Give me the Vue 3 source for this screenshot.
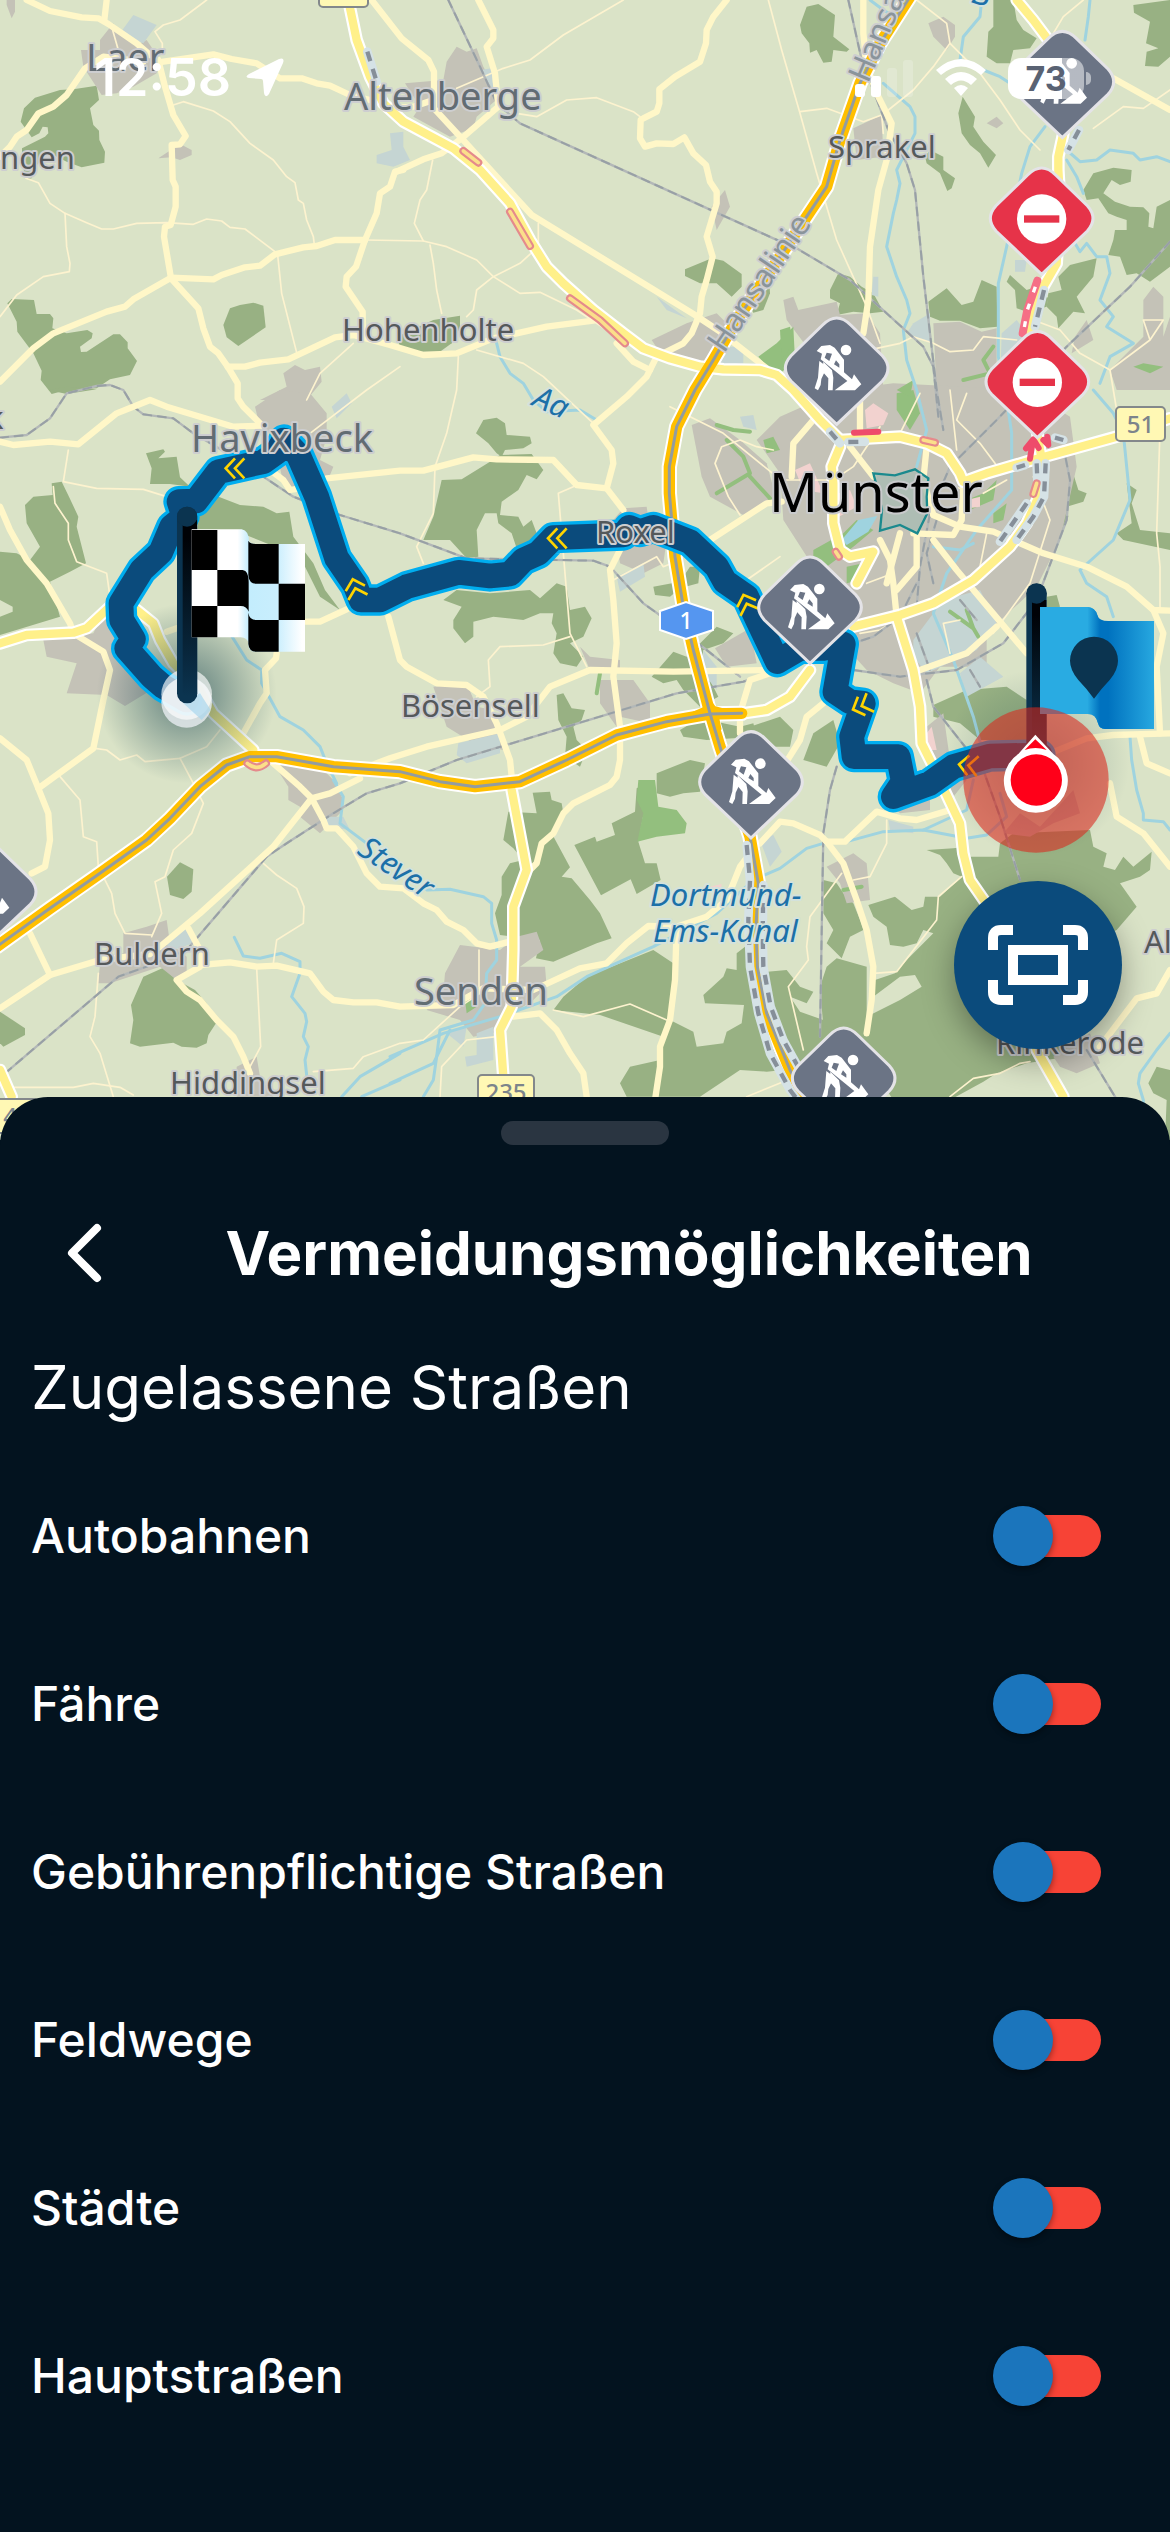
<template>
  <main class="screen">
    <section class="map" aria-label="Karte">
      <svg class="map-canvas" viewBox="0 0 1170 1140" aria-hidden="true">
        <defs>
          <linearGradient id="pole" x1="0" y1="0" x2="0" y2="1">
            <stop offset="0.1" stop-color="#000206" />
            <stop offset="1" stop-color="#0b3450" />
          </linearGradient>
          <linearGradient id="flagBack">
            <stop offset="0.2" stop-color="#0072bf" />
            <stop offset="1" stop-color="#27a8e0" />
          </linearGradient>
          <linearGradient id="flagFold">
            <stop offset="0" stop-color="#29abe2" />
            <stop offset="0.6" stop-color="#0072bf" />
          </linearGradient>
          <linearGradient id="clothFold">
            <stop offset="0.8" stop-color="#fff" />
            <stop offset="1" stop-color="#c3ecfd" />
          </linearGradient>
          <linearGradient id="clothBack">
            <stop offset="0" stop-color="#c3edfd" />
            <stop offset="0.5" stop-color="#c9eefd" />
            <stop offset="0.95" stop-color="#fff" />
          </linearGradient>
          <radialGradient id="shade">
            <stop offset="0" stop-color="#0b3a4a" stop-opacity="0.6" />
            <stop offset="0.5" stop-color="#0b3a4a" stop-opacity="0.3" />
            <stop offset="1" stop-color="#0b3a4a" stop-opacity="0" />
          </radialGradient>
          <path
            id="pin"
            d="M0 168 L-137 38 Q-171 0 -137 -38 L-42 -130 Q0 -172 42 -130 L137 -38 Q171 0 137 38 Z"
          />
          <g id="worker" fill="#fff">
            <circle cx="28" cy="-55" r="16" />
            <path
              fill-rule="evenodd"
              d="M-60 -52 L-46 -67 L-20 -70 L-6 -62 L22 -26 L22 12 L46 33 L52 18 L74 48 L55 66 L-6 66 L32 38 L-48 -27 L-44 -44 Z M-30 -47 L-36 -32 L-22 -22 L-14 -44 Z M-2 -24 L8 -12 L8 -2 L-8 -12 Z"
            />
            <path d="M-52 -22 L-36 -10 L-32 2 L-46 32 L-48 50 L-56 66 L-66 60 L-56 28 Z" />
            <path d="M-40 -20 L-14 6 L-10 28 L-12 66 L-26 66 L-25 30 L-42 10 Z" />
          </g>
          <path id="chevrons" d="M0 -30 L-28 0 L0 30 M28 -30 L0 0 L28 30" />
        </defs>

        <rect class="ground" width="1170" height="1140" />

        <!-- geometry is kept in map units, three to a pixel -->
        <g transform="scale(0.333333)">
          <path v-for="d in forests" :key="d" class="forest" :d="d" />
          <path v-for="d in towns" :key="d" class="town" :d="d" />
          <path v-for="d in industry" :key="d" class="industry" :d="d" />
          <path v-for="d in parks" :key="d" class="park" :d="d" />
          <path v-for="d in hospitals" :key="d" class="hospital" :d="d" />
          <path class="lake" d="M2525 1620 L2575 1560 L2632 1548 L2605 1595 L2540 1635 Z" />
          <path v-for="d in parkLines" :key="d" class="line park-line" :d="d" />
          <path v-for="d in rivers" :key="d" class="line river" :d="d" />
          <path v-for="d in lanes" :key="d" class="line lane" :d="d" />
          <path v-for="d in rails" :key="d" class="line rail" :d="d" />
          <path v-for="d in rails" :key="'t' + d" class="line rail-ties" :d="d" />
          <path v-for="d in roads" :key="d" class="line road" :d="d" />
          <path class="old-town" d="M2620 1420 L2685 1426 L2745 1408 L2785 1435 L2780 1490 L2782 1540 L2752 1600 L2700 1575 L2640 1592 L2646 1530 L2636 1480 Z" />
          <path v-for="d in mainRoads" :key="'c' + d" class="line main-casing" :d="d" />
          <path v-for="d in motorways" :key="'c' + d" class="line motorway-casing" :d="d" />
          <path v-for="d in mainRoads" :key="d" class="line main-road" :d="d" />
          <path v-for="d in motorways" :key="d" class="line motorway" :d="d" />
          <path class="junction" d="M2085 2140 L2118 2125 L2120 2095 L2142 2125 L2185 2136 L2150 2152 L2158 2190 L2130 2156 Z" />
          <path v-for="d in motorways" :key="'m' + d" class="line motorway-middle" :d="d" />
          <path v-for="d in works" :key="d" class="line works" :d="d" />
          <path v-for="d in works" :key="'d' + d" class="line works-dash" :d="d" />
          <g v-for="d in jams" :key="d">
            <path class="line jam-edge" :d="d" />
            <path class="line jam" :d="d" />
          </g>
          <path class="line closed" d="M2562 1298 L2635 1295" />
          <path class="line closed-wide" d="M3112 842 L3082 930 L3068 1000" />
          <path class="line closed-dash" d="M3106 860 L3082 930 L3070 1000" />
          <path class="line closed" d="M3090 1376 L3098 1325 M3078 1345 L3100 1318 L3116 1344 M3130 1320 L3145 1335 L3142 1310" />

          <circle class="shade" cx="560" cy="2080" r="270" />
          <circle class="shade faint" cx="3108" cy="2290" r="280" />

          <path class="line route-casing" :d="route" />
          <path class="line route" :d="route" />
          <use
            v-for="c in chevrons"
            :key="c.x"
            href="#chevrons"
            class="line chevron"
            :transform="`translate(${c.x} ${c.y}) rotate(${c.angle})`"
          />
        </g>

        <g v-for="s in shields" :key="s.x">
          <rect class="shield" :x="s.x" :y="s.y" :width="s.w" height="34" rx="4" />
          <text v-if="s.text" class="shield-text" :x="s.x + s.w / 2" :y="s.y + 26">{{ s.text }}</text>
        </g>
        <path class="autobahn" d="M660 611 L686 602 L713 611 L713 630 L686 639 L660 630 Z" />
        <text class="autobahn-text" x="686" y="629">1</text>

        <text
          v-for="l in labels"
          :key="l.text + l.x"
          :class="['label', l.kind]"
          :transform="`translate(${l.x} ${l.y}) rotate(${l.angle || 0})`"
        >{{ l.text }}</text>

        <g transform="scale(0.333333)">
          <g v-for="p in pins" :key="p.x" :transform="`translate(${p.x} ${p.y})`">
            <use href="#pin" :class="['pin', p.kind]" />
            <use v-if="p.kind === 'work'" href="#worker" />
            <template v-else>
              <circle cy="2" r="74" fill="#fff" />
              <rect class="bar" x="-53" y="-9" width="106" height="22" />
            </template>
          </g>

          <!-- destination -->
          <circle cx="560" cy="2107" r="76" fill="#e9eef1" fill-opacity="0.8" />
          <circle cx="560" cy="2083" r="76" fill="#fff" fill-opacity="0.65" />
          <path d="M550 2110 L600 2080 L632 2130 L605 2160 Z" fill="#a9d6ec" fill-opacity="0.7" />
          <rect x="531" y="1520" width="61" height="590" rx="30" fill="#0b3450" />
          <rect x="548" y="1560" width="43" height="530" fill="url(#pole)" />
          <circle cx="561" cy="1550" r="30" fill="#0b3450" />
          <path d="M575 1588 H725 Q747 1592 747 1625 L747 1932 Q742 1912 722 1912 H575 Z" fill="url(#clothFold)" />
          <path d="M745 1620 Q750 1632 768 1632 H915 V1955 H765 Q747 1955 745 1935 Z" fill="url(#clothBack)" />
          <path d="M575 1590 H652 V1710 H575 Z M575 1818 H652 V1912 H575 Z M652 1710 H728 Q746 1712 746 1745 V1835 Q740 1818 722 1818 H652 Z" />
          <path d="M745 1622 Q750 1632 768 1632 H836 V1751 H768 Q747 1751 745 1725 Z M836 1751 H915 V1860 H836 Z M745 1838 Q748 1860 768 1860 H836 V1955 H768 Q747 1955 745 1932 Z" />

          <!-- start -->
          <rect x="3079" y="1750" width="61" height="560" rx="30" fill="#0b3450" />
          <rect x="3096" y="1800" width="43" height="440" fill="url(#pole)" />
          <circle cx="3110" cy="1781" r="30" fill="#0b3450" />
          <path d="M3290 1863 H3462 V2187 H3315 Q3296 2187 3290 2150 Z" fill="url(#flagBack)" />
          <path d="M3120 1821 H3265 Q3285 1822 3292 1845 Q3296 1863 3315 1863 V2187 Q3298 2187 3294 2170 Q3288 2142 3268 2142 H3120 Z" fill="#29abe2" />
          <path d="M3262 1821 Q3285 1822 3292 1845 Q3296 1863 3325 1863 V2187 H3315 Q3298 2187 3294 2170 Q3288 2142 3262 2142 Z" fill="url(#flagFold)" />
          <path d="M3282 2096 Q3262 2068 3235 2040 Q3210 2010 3210 1982 A72 72 0 0 1 3354 1982 Q3354 2010 3329 2040 Q3302 2068 3282 2096 Z" fill="#0b3450" />

          <!-- own position -->
          <circle class="halo" cx="3108" cy="2340" r="218" />
          <path d="M3106 2204 L3160 2262 A96 96 0 1 1 3055 2262 Z" fill="#fff" />
          <path d="M3106 2218 L3140 2250 Q3106 2238 3074 2250 Z" fill="#ff0019" />
          <circle cx="3109" cy="2340" r="77" fill="#ff0019" />
        </g>
      </svg>

      <header class="status-bar">
        <div class="status-left">
          <time>12:58</time>
          <svg width="40" height="40" viewBox="0 0 40 40" aria-hidden="true">
            <path d="M38 5 L24 36 Q20 41 19 35 L18 23 Q18 21 16 21 L4 20 Q-1 19 4 16 L34 1 Q40 -1 38 5 Z" fill="#fff" />
          </svg>
        </div>
        <div class="status-right">
          <svg width="59" height="38" viewBox="0 0 59 38" fill="#fff" aria-hidden="true">
            <rect y="25" width="10" height="13" rx="3" />
            <rect x="16" y="17" width="10" height="21" rx="3" />
            <rect x="32" y="9" width="10" height="29" rx="3" opacity="0.2" />
            <rect x="48" y="1" width="10" height="37" rx="3" opacity="0.2" />
          </svg>
          <svg width="50" height="38" viewBox="0 0 50 38" fill="#fff" aria-hidden="true">
            <path d="M0 11 Q25 -11 50 11 L45 16 Q25 -1 5 16 Z" />
            <path d="M9 20 Q25 6 41 20 L35 26 Q25 17 15 26 Z" />
            <path d="M18 29 Q25 23 32 29 L25 37 Z" />
          </svg>
          <div class="battery">73</div>
        </div>
      </header>

      <button class="fit-button" type="button" aria-label="Route anzeigen">
        <svg width="100" height="80" viewBox="0 0 100 80" fill="none" stroke="#fff" stroke-width="10">
          <path d="M5 25 V13 Q5 5 13 5 H25 M75 5 H87 Q95 5 95 13 V25 M95 55 V67 Q95 75 87 75 H75 M25 75 H13 Q5 75 5 67 V55" />
          <rect x="25" y="25" width="50" height="30" />
        </svg>
      </button>
    </section>

    <section class="sheet">
      <div class="handle"></div>
      <div class="sheet-header">
        <button class="back" type="button" aria-label="Zurück">
          <svg width="38" height="62" viewBox="0 0 38 62" fill="none" stroke="#fff" stroke-width="8" stroke-linecap="round" stroke-linejoin="round">
            <path d="M32 6 L7 31 L32 56" />
          </svg>
        </button>
        <h1>Vermeidungsmöglichkeiten</h1>
      </div>
      <h2>Zugelassene Straßen</h2>
      <div v-for="option in options" :key="option.id" class="option">
        <label :for="option.id">{{ option.label }}</label>
        <input :id="option.id" v-model="option.allowed" class="switch" type="checkbox" role="switch" />
      </div>
    </section>
  </main>
</template>

<script setup>
import { ref } from 'vue'

const options = ref([
  { id: 'motorways', label: 'Autobahnen', allowed: false },
  { id: 'ferry', label: 'Fähre', allowed: false },
  { id: 'toll', label: 'Gebührenpflichtige Straßen', allowed: false },
  { id: 'tracks', label: 'Feldwege', allowed: false },
  { id: 'cities', label: 'Städte', allowed: false },
  { id: 'main', label: 'Hauptstraßen', allowed: false }
])

const labels = [
  { text: 'Laer', x: 86, y: 71, kind: 'town-name' },
  { text: 'Altenberge', x: 344, y: 110, kind: 'town-name' },
  { text: 'ngen', x: 0, y: 169, kind: 'village' },
  { text: 'Hohenholte', x: 342, y: 341, kind: 'village' },
  { text: 'Sprakel', x: 828, y: 158, kind: 'village' },
  { text: 'k', x: -13, y: 429, kind: 'village' },
  { text: 'Havixbeck', x: 191, y: 452, kind: 'town-name' },
  { text: 'Roxel', x: 596, y: 543, kind: 'village' },
  { text: 'Bösensell', x: 401, y: 717, kind: 'village' },
  { text: 'Münster', x: 769, y: 512, kind: 'city' },
  { text: 'Buldern', x: 94, y: 965, kind: 'village' },
  { text: 'Hiddingsel', x: 170, y: 1094, kind: 'village' },
  { text: 'Senden', x: 414, y: 1005, kind: 'town-name' },
  { text: 'Rinkerode', x: 996, y: 1054, kind: 'village' },
  { text: 'Al', x: 1144, y: 953, kind: 'village' },
  { text: 'Hansalinie', x: 724, y: 354, angle: -56, kind: 'road-name' },
  { text: 'Hansalinie', x: 868, y: 84, angle: -67, kind: 'road-name' },
  { text: 'Dortmund-', x: 650, y: 906, kind: 'water' },
  { text: 'Ems-Kanal', x: 653, y: 942, kind: 'water' },
  { text: 'Stever', x: 356, y: 853, angle: 34, kind: 'water' },
  { text: 'Aa', x: 531, y: 405, angle: 24, kind: 'water' },
  { text: 'B', x: 970, y: 2, angle: 17, kind: 'water' }
]

const shields = [
  { text: '', x: 319, y: -27, w: 49 },
  { text: '51', x: 1116, y: 407, w: 49 },
  { text: '235', x: 478, y: 1075, w: 56 },
  { text: '4', x: -18, y: 1099, w: 56 }
]

const pins = [
  { x: 3187, y: 245, kind: 'work' },
  { x: 2510, y: 1105, kind: 'work' },
  { x: 2430, y: 1822, kind: 'work' },
  { x: 2253, y: 2346, kind: 'work' },
  { x: 2531, y: 3235, kind: 'work' },
  { x: -46, y: 2675, kind: 'work' },
  { x: 3125, y: 655, kind: 'blocked' },
  { x: 3112, y: 1145, kind: 'blocked' }
]

const chevrons = [
  { x: 705, y: 1405, angle: 0 },
  { x: 1066, y: 1765, angle: 74 },
  { x: 1672, y: 1615, angle: 0 },
  { x: 2240, y: 1811, angle: 70 },
  { x: 2585, y: 2118, angle: -22 },
  { x: 2905, y: 2296, angle: 6 }
]

const route =
  'M560 2100 L490 2060 L455 2030 L380 1945 L400 1917 L365 1860 L363 1810 L425 1710 L482 1657 L515 1580 L552 1550 L537 1505 L588 1503 L655 1415 L790 1385 L832 1355 L852 1320 L895 1365 L950 1490 L1010 1675 L1065 1755 L1083 1800 L1140 1800 L1220 1760 L1375 1717 L1470 1728 L1530 1722 L1570 1680 L1615 1660 L1660 1613 L1870 1605 L1887 1582 L1920 1595 L1960 1582 L2070 1625 L2150 1700 L2175 1745 L2240 1790 L2275 1865 L2332 1985 L2400 1945 L2470 1945 L2530 1932 L2505 2075 L2550 2105 L2590 2110 L2555 2210 L2562 2270 L2695 2270 L2710 2345 L2680 2390 L2790 2350 L2860 2300 L2970 2268 L3120 2265'

const forests = [
  'M105 293 180 270 225 267 290 257 297 300 270 325 280 375 297 392 298 420 315 455 313 488 245 502 200 485 140 455 100 510 95 535 78 537 66 490 66 445 135 410 145 400 143 382 128 380 118 400 95 412 62 365 72 325Z',
  'M22 910 35 897 102 900 110 942 150 942 160 955 157 985 200 1000 262 990 278 1000 275 1015 240 1040 243 1056 260 1055 340 1003 360 1003 383 1027 383 1045 411 1083 390 1125 330 1138 290 1165 200 1170 155 1182 122 1140 125 1112 100 1060 52 995 50 965Z',
  'M690 925 720 915 760 908 790 917 797 982 715 1038 680 1012 670 975Z',
  'M2055 808 2135 775 2170 782 2225 822 2225 860 2195 890 2150 850 2100 850 2055 828Z',
  'M2270 840 2308 840 2310 880 2290 930 2260 938 2240 900Z',
  'M1190 1010 1300 960 1380 947 1380 985 1355 1030 1320 1055 1250 1055 1200 1040Z',
  'M2400 75 2420 20 2455 12 2505 45 2500 110 2548 148 2540 155 2500 150 2495 185 2470 188 2450 150 2430 158 2428 130 2405 100Z',
  'M2980 0 3040 0 3050 60 3070 90 3110 115 3090 145 3040 150 3030 190 2990 190 2960 170 2965 95 2980 80Z',
  'M3400 15 3510 0 3510 170 3475 200 3435 198 3440 155 3475 145 3438 130 3450 65 3402 38Z',
  'M2875 340 2888 290 2925 350 2920 380 2950 425 2988 465 2965 503 2940 460 2910 435 2885 400Z',
  'M2775 470 2790 450 2830 470 2830 510 2865 535 2855 565 2842 573 2820 520 2780 490Z',
  'M3250 570 3280 520 3340 503 3395 510 3392 545 3360 555 3335 540 3310 580 3345 605 3390 620 3430 622 3448 640 3445 680 3460 685 3470 620 3510 600 3510 800 3450 845 3410 820 3380 825 3360 770 3325 765 3340 720 3345 690 3380 690 3380 660 3350 650 3325 640 3295 595 3260 600Z',
  'M2490 870 2515 820 2550 830 2585 860 2620 880 2650 935 2610 940 2560 935 2510 945 2520 910 2490 895Z',
  'M2785 905 2840 865 2885 915 2920 905 2945 840 2990 860 2992 980 2940 985 2880 962 2820 962 2790 950Z',
  'M3020 845 3030 825 3080 870 3110 860 3145 895 3140 920 3080 935 3050 925 3045 870Z',
  'M3175 830 3210 795 3290 775 3280 830 3230 890 3255 940 3220 935 3175 985 3170 950 3140 920 3145 880 3185 870Z',
  'M438 1360 490 1348 495 1355 475 1375 530 1370 540 1432 570 1460 510 1452 450 1452 455 1405Z',
  'M155 1450 185 1445 207 1490 235 1550 230 1580 258 1690 210 1715 150 1745 180 1850 0 1905 0 1850 38 1835 38 1820 0 1800 0 1655 50 1660 90 1680 120 1640 80 1570 75 1515 100 1490 158 1485Z',
  'M600 1530 650 1488 720 1515 790 1520 830 1540 868 1535 880 1610 940 1690 975 1770 1020 1830 960 1790 900 1670 700 1590 590 1600Z',
  'M145 1170 200 1182 290 1168 200 1160Z',
  'M1428 1300 1450 1260 1490 1253 1515 1270 1520 1305 1590 1310 1595 1330 1570 1345 1515 1350 1505 1370 1490 1360 1465 1330Z',
  'M1325 1440 1385 1438 1470 1385 1500 1365 1595 1362 1630 1410 1610 1438 1580 1425 1555 1470 1505 1505 1500 1545 1555 1550 1570 1580 1595 1560 1610 1600 1590 1640 1550 1645 1535 1600 1495 1570 1490 1540 1455 1540 1430 1590 1435 1670 1400 1675 1350 1620 1270 1620 1300 1550Z',
  'M1330 1800 1370 1770 1470 1780 1590 1770 1620 1795 1670 1750 1700 1760 1710 1830 1755 1820 1775 1855 1750 1910 1710 1930 1750 1970 1730 2000 1680 1990 1660 1960 1670 1900 1655 1870 1660 1840 1620 1840 1570 1860 1480 1850 1420 1865 1420 1910 1395 1930 1360 1885 1360 1860 1385 1820Z',
  'M1670 2085 1690 2080 1715 2125 1755 2130 1745 2160 1720 2180 1730 2220 1760 2250 1740 2300 1695 2270 1700 2210 1675 2160Z',
  'M1960 1760 2040 1745 2070 1700 2100 1700 2095 1750 2040 1765 2010 1790 1965 1785Z',
  'M1955 2030 2020 1955 2060 1970 2150 1880 2200 1900 2170 1930 2110 1950 2100 2010 2130 2040 2155 2090 2100 2120 2050 2070 2030 2040 1990 2050Z',
  'M2040 2190 2100 2155 2170 2170 2220 2180 2260 2170 2270 2210 2200 2215 2120 2220 2050 2210Z',
  'M1970 2320 2070 2280 2115 2290 2100 2375 2050 2380 2010 2390 1970 2380Z',
  'M2250 2180 2340 2150 2380 2190 2370 2240 2300 2240Z',
  'M2410 2280 2440 2200 2500 2160 2520 2230 2480 2300Z',
  'M1598 2378 1650 2375 1655 2400 1685 2410 1690 2440 1655 2500 1710 2602 1685 2630 1715 2635 1770 2700 1800 2740 1835 2815 1790 2830 1730 2855 1660 2885 1608 2875 1620 2820 1500 2805 1485 2740 1505 2685 1505 2630 1530 2590 1570 2580 1540 2545 1510 2520 1525 2435 1610 2440Z',
  'M1723 2535 1785 2510 1790 2525 1845 2505 1835 2470 1905 2435 1910 2365 1960 2340 1975 2440 1930 2445 1915 2525 1935 2590 1970 2590 1982 2640 1910 2682 1892 2638 1803 2686Z',
  'M1660 3030 1690 2990 1760 2930 1960 2850 2020 2890 2020 2980 2010 3060 2080 3095 2090 3140 2170 3130 2180 3095 2225 3070 2232 3015 2115 3010 2110 2985 2170 2930 2180 2905 2210 2910 2210 2860 2235 2840 2250 2920 2360 2910 2400 2960 2440 2975 2420 3010 2370 2990 2400 3035 2470 3060 2560 3060 2610 3060 2600 3200 2440 3200 2300 3215 2220 3210 2100 3290 1880 3290 1860 3250 1890 3200 1980 3180 1990 3110 1800 3045Z',
  'M2625 2940 2685 2920 2720 2880 2800 2800 2770 2790 2750 2830 2710 2840 2670 2835 2660 2780 2620 2750 2605 2715 2685 2690 2735 2730 2770 2720 2775 2690 2820 2690 2885 2630 2860 2620 2840 2590 2820 2565 2780 2550 2860 2545 2900 2540 2910 2570 2995 2570 3000 2530 3040 2500 3270 2490 3280 2540 3320 2560 3310 2600 3345 2610 3370 2570 3400 2600 3455 2555 3450 2610 3420 2630 3360 2650 3410 2720 3350 2790 3240 2840 3240 3040 3200 3170 3080 3190 2990 3220 2950 3245 2850 3300 2680 3300 2600 3180 2600 3050 2700 3000 2765 2960 2745 2925 2700 2930 2620 2990Z',
  'M2470 2640 2510 2650 2530 2680 2560 2710 2580 2760 2590 2790 2550 2810 2525 2875 2480 2830 2500 2790 2470 2740Z',
  'M2480 2900 2510 2875 2600 2900 2600 3060 2470 3080 2460 2960Z',
  'M3445 3250 3470 3200 3510 3210 3510 3420 3495 3420 3500 3300 3460 3280Z',
  'M501 2630 540 2587 580 2608 575 2675 550 2697 510 2685Z',
  'M430 2930 490 2903 530 2940 585 2970 620 3010 648 3070 625 3105 620 3130 590 3143 545 3140 520 3128 420 3140 390 3130 400 3060 393 3015Z',
  'M0 3035 75 3085 75 3105 10 3140 0 3130Z',
  'M3210 1390 3235 1470 3260 1480 3250 1505 3200 1520 3205 1550 3180 1610Z',
  'M3380 1450 3410 1470 3395 1510 3420 1590 3510 1600 3510 1650 3370 1620 3350 1600 3395 1570Z',
  'M2800 2115 2900 2070 3020 2060 3080 2100 3080 2220 2940 2220 2880 2170 2800 2150Z',
  'M3140 1790 3170 1785 3180 1820 3140 1830Z'
]

const towns = [
  'M20 0 45 0 45 35 35 55 20 15Z',
  'M243 150 300 150 300 120 340 70 345 95 420 130 440 120 480 180 470 220 400 260 350 280 305 285 250 200Z',
  'M475 475 540 432 575 450 575 465 540 480 515 472Z',
  'M850 1120 885 1095 915 1110 960 1100 965 1145 920 1200 780 1200 860 1160Z',
  'M1215 250 1330 240 1340 185 1370 140 1400 155 1430 145 1450 200 1500 290 1430 350 1420 385 1350 410 1240 350 1260 320Z',
  'M2135 620 2175 570 2190 620 2150 690Z',
  'M1955 1020 2060 970 2150 940 2180 970 2160 1040 2110 1090 1975 1050Z',
  'M2560 385 2645 345 2650 470 2570 480Z',
  'M2785 70 2830 50 2865 75 2865 110 2840 150 2800 110Z',
  'M2350 900 2380 890 2395 930 2510 905 2520 945 2600 940 2640 1000 2650 1170 2450 1080 2360 960Z',
  'M2800 970 2880 965 2945 995 2990 985 2990 1180 2810 1180Z',
  'M3430 900 3460 860 3490 890 3490 1010 3510 950 3510 1170 3350 1170 3330 1110 3430 1010Z',
  'M3225 1010 3260 960 3280 1020 3215 1060Z',
  'M2960 370 2990 350 3010 370 2990 385Z',
  'M2520 1170 2680 1150 3080 1170 3210 1250 3230 1400 3180 1620 3110 1760 2960 1900 2960 2000 2820 2000 2760 2080 2680 2050 2600 2010 2500 1900 2400 1800 2440 1700 2350 1560 2340 1420 2270 1320 2340 1250Z',
  'M2075 1275 2130 1255 2220 1320 2300 1390 2330 1500 2230 1545 2130 1490 2105 1430Z',
  'M1840 1560 1870 1525 1940 1520 1950 1590 2000 1620 1990 1690 1930 1720 1860 1690Z',
  'M1740 1940 1770 1970 1860 1980 1860 2010 1770 2010Z',
  'M1800 2040 1900 2040 1950 2110 1950 2170 1860 2150 1850 2180 1800 2110Z',
  'M2145 1945 2250 1885 2270 1990 2180 2000Z',
  'M1300 2060 1400 2050 1430 2120 1480 2130 1510 2250 1420 2230 1340 2180Z',
  'M765 1220 840 1170 930 1180 980 1240 980 1310 960 1380 1000 1400 960 1500 850 1450 835 1380 840 1320 780 1280Z',
  'M130 1920 280 1900 320 1820 420 1890 470 2060 375 2118 320 2085 200 2080 230 1990 140 1970Z',
  'M370 2800 440 2780 500 2760 510 2830 560 2870 560 2920 530 2940 480 2900 330 2950 295 2950 300 2890 370 2860Z',
  'M820 2290 960 2300 1000 2340 1030 2400 1020 2440 960 2500 900 2450 900 2420 865 2400 865 2360Z',
  'M710 3200 770 3170 780 3230 820 3290 710 3290Z',
  'M1335 2920 1380 2835 1500 2850 1550 2810 1610 2795 1630 2850 1560 2900 1635 2900 1640 2960 1600 3000 1540 3040 1520 3090 1420 3110 1380 3060 1280 3030 1330 2980Z',
  'M2480 2600 2560 2560 2600 2590 2610 2700 2540 2710 2520 2650Z',
  'M2660 2400 2720 2360 2790 2360 2790 2430 2700 2440Z',
  'M2780 2180 2830 2140 2850 2280 2900 2340 2860 2390 2780 2340Z',
  'M3010 2500 3060 2440 3120 2480 3220 2370 3240 2440 3160 2470 3090 2510Z',
  'M3160 3170 3270 3100 3300 3190 3230 3220 3180 3200Z'
]

const industry = [
  'M360 100 400 45 470 75 430 130Z',
  'M1170 400 1210 395 1210 440 1230 480 1180 500 1130 490 1130 465 1175 450Z',
  'M1440 210 1475 205 1480 270Z',
  'M1970 890 2060 955 2000 930Z',
  'M2170 1040 2230 1040 2230 1090 2160 1100Z',
  'M995 1220 1040 1180 1055 1210 1010 1255Z',
  'M1375 2230 1500 2200 1500 2260 1400 2290 1370 2265Z',
  'M1850 1730 1930 1690 1935 1730 1860 1775Z',
  'M2110 1950 2150 2000 2150 2070 2110 2020Z',
  'M1430 3100 1480 3080 1480 3180 1400 3200 1395 3170 1430 3165Z',
  'M1340 3100 1400 3080 1390 3140Z',
  'M560 2780 580 2830 520 2850 500 2835Z',
  'M2740 1920 2830 1800 2940 1770 2990 1870 2930 1950 2780 2020 2740 1970Z',
  'M2880 2020 2940 1970 3010 2030 2900 2090Z',
  'M3005 1000 3050 960 3080 1000 3040 1170 3000 1170Z',
  'M2740 970 2790 940 2790 1030 2720 1000Z',
  'M3045 780 3080 780 3075 815 3045 815Z',
  'M2620 830 2635 830 2635 890 2615 885Z',
  'M2665 2460 2740 2480 2740 2500 2670 2490Z',
  'M2280 2520 2320 2505 2345 2555 2310 2600Z',
  'M975 2450 1030 2450 1050 2490 980 2480Z',
  'M2220 1250 2260 1245 2270 1290 2230 1280Z'
]

const parks = [
  'M2440 1650 2530 1600 2570 1560 2620 1590 2560 1640 2480 1700 2440 1690Z',
  'M2690 1180 2740 1170 2760 1240 2730 1290 2690 1230Z',
  'M2275 1070 2330 1030 2380 980 2385 1080 2330 1130Z',
  'M2290 1320 2320 1310 2340 1350 2300 1360Z',
  'M1915 2340 1965 2340 1975 2420 2030 2430 2060 2470 2055 2500 1970 2510 1912 2525 1930 2440 1910 2400Z',
  'M2340 990 2370 980 2380 1030 2345 1080Z',
  'M2900 1500 2950 1480 2990 1440 2980 1500 2910 1530Z',
  'M3490 1100 3450 1120 3400 1100 3430 1090Z',
  'M2690 1170 2740 1140 2730 1190Z',
  'M2540 1700 2590 1690 2580 1740 2540 1750Z',
  'M2980 1540 3020 1510 3010 1560 2980 1570Z',
  'M1395 3000 1420 2990 1430 3020 1400 3040Z'
]

const hospitals = [
  'M2595 1230 2620 1210 2665 1240 2650 1275 2600 1285Z',
  'M2385 1410 2430 1390 2470 1480 2410 1470Z',
  'M2480 1490 2550 1470 2570 1520 2500 1560Z',
  'M2900 1500 2940 1490 2940 1520 2905 1525Z',
  'M2780 2200 2795 2180 2810 2250 2785 2250Z',
  'M2130 2660 2165 2652 2160 2690Z'
]

const parkLines = [
  'M2150 1275 L2200 1290 L2250 1295',
  'M2180 1320 L2230 1370 L2250 1420 L2150 1480',
  'M2250 1430 L2310 1495',
  'M2850 1835 L2920 1885 L2935 1910 M2920 1885 L2900 1830',
  'M2980 1040 L2950 1080 L2970 1120 L2890 1140',
  'M1800 2020 L1790 2080',
  'M2530 2670 L2585 2660'
]

const rivers = [
  'M1490 1030 L1500 1070 L1530 1120 L1570 1150 L1600 1200 L1640 1235 L1740 1230 L1790 1260',
  'M2610 0 L2650 30 L2700 60',
  'M2945 0 L2940 50 L2890 110 L2880 180',
  'M3270 0 L3265 50 L3255 120',
  'M2650 250 L2730 320 L2745 350 L2745 400 L2690 510 L2700 550 L2690 600 L2680 640 L2660 740 L2690 830 L2720 900 L2730 940 L2710 990 L2720 1080 L2750 1170 L2780 1290 L2750 1400',
  'M2950 210 L3000 230 L3030 250',
  'M3135 380 L3090 440 L3065 520 L3020 740 L2995 850 L2995 1070 L3020 1200 L3035 1300 L3035 1470 L2930 1590 L2840 1720 L2800 1840 L2860 1980 L2920 2150 L2960 2300',
  'M3200 450 L3240 485 L3290 480 L3330 450 L3400 460 L3420 480 L3470 470 L3510 485',
  'M3200 480 L3230 530 L3250 580',
  'M3225 730 L3240 755 L3260 730 L3290 770 L3320 770 L3330 820 L3300 900 L3340 950 L3320 980 L3400 1030 L3330 1070 L3300 1150',
  'M3280 1170 L3340 1240 L3370 1300 L3380 1400 L3390 1500 L3340 1620 L3240 1710 L3260 1750 L3320 1790 L3340 1850',
  'M1170 3170 L1330 3100 L1500 3050 L1670 2990 L1760 2930 L1960 2840 L2150 2740 L2260 2640 L2340 2605 L2420 2545 L2470 2530 L2540 2525 L2650 2495 L2770 2490 L2900 2515 L2960 2505 L3020 2450 L3000 2380',
  'M2770 2490 L2900 2430 L2920 2340',
  'M1280 2670 L1350 2668 L1450 2690 L1475 2710 L1475 2770 L1490 2820 L1490 2880 L1460 2920 L1455 3010 L1420 3060 L1320 3090 L1310 3170 L1300 3240 L1270 3290',
  'M1170 3250 L1300 3190 L1350 3090',
  'M1000 2340 L1030 2390 L1020 2470 L1100 2530',
  'M703 2812 L730 2868 L780 2875 L845 2860 L900 2885 L900 2920 L875 2990 L915 3040 L920 3065 L910 3110 L925 3140 L915 3180 L920 3225',
  'M1025 3290 L1080 3230 L1200 3160',
  'M1085 3290 L1200 3240',
  'M690 1900 L740 1980 L785 2010 L785 2050 L840 2150 L910 2190 L960 2240 L980 2290 L1010 2350',
  'M3390 2210 L3395 2280 L3410 2370 L3430 2440 L3430 2460 L3490 2465 L3510 2490',
  'M3510 3100 L3470 3150 L3420 3220 L3415 3250 L3430 3300 L3430 3400',
  'M2800 1640 L2880 1650 L2920 1630'
]

const rails = [
  'M1345 0 L1440 200 L1490 310 L1560 370 L2320 715 L2390 745 L2550 840 L2770 1040 L2800 1100 L2815 1250',
  'M2545 0 L2585 180 L2620 270 L2665 390 L2720 490 L2745 570 L2770 830 L2790 1000 L2810 1170 L2830 1290',
  'M3510 725 L3390 860 L3200 1040 L2990 1260 L2850 1400 L2790 1540 L2760 1700 L2750 1820',
  'M2810 1560 L2780 1660 L2800 1750',
  'M0 1313 L80 1305 L150 1255 L200 1180 L290 1158 L330 1155 L370 1170 L400 1220 L430 1243 L520 1255 L580 1300 L700 1370 L880 1490 L1020 1545 L1200 1600 L1400 1675 L1780 1682 L1830 1700 L1930 1810 L2000 1860 L2120 1950 L2220 2030',
  'M15 3220 L355 2930 L440 2900 L560 2850 L800 2570 L860 2530 L1000 2440 L1100 2380 L1200 2350 L1370 2280 L2030 2080 L2230 2045 L2500 1950 L2620 1910 L2700 1850 L2750 1750',
  'M2510 2300 L2490 2370 L2470 2500 L2465 2800 L2460 3110',
  'M2780 2040 L2800 2120 L2950 2310 L3000 2450 L3060 2640',
  'M3260 3150 L3345 3290 L3420 3400',
  'M2560 2010 L2700 2030 L2870 2010 L3010 1930 L3110 1800 L3200 1560 L3210 1440 L3190 1340',
  'M2880 1800 L2930 1860 M2750 1900 L2790 2010 M2910 2010 L2940 2060'
]

const lanes = [
  'M620 0 L540 60 L490 75 L465 95 L487 130 L487 160',
  'M335 80 L355 150',
  'M520 315 L550 305 L640 333 L690 365 L750 430 L820 480 L860 530 L885 548 L895 600 L910 610 L920 660 L940 710 L943 735',
  'M78 535 L115 548 L150 610 L195 640 L260 668 L305 687 L340 687 L410 670 L500 668 L580 673 L620 657 L665 663 L690 682 L735 687 L825 755',
  'M195 640 L200 740 L210 790 L208 815 L130 830 L50 885 L0 950',
  'M833 765 L845 880 L890 1058',
  'M1095 720 L1270 723 L1340 740 L1430 780 L1480 830 L1560 880 L1620 877 L1730 930 L1850 1010',
  'M1298 480 L1280 570 L1260 600 L1243 670 L1270 723 M1290 735 L1300 790 L1310 870 L1325 940',
  'M1615 670 L1615 740 L1560 790 L1480 830 L1430 870 L1420 930 L1400 950',
  'M1870 0 L1690 105 L1590 180 L1510 205 L1370 265',
  'M1550 340 L1610 350 L1700 300 L1790 293 L1900 335 L1920 350',
  'M2305 0 L2345 150 L2400 340 L2450 520 L2510 720 L2600 920 L2640 1030',
  'M2400 335 L2480 325 L2590 365 L2645 345 L2650 400',
  'M2750 0 L2840 70 L2850 130 L2940 220 L3000 300 L3060 390 L3120 450',
  'M2665 330 L2740 270 L2800 200 L2850 130',
  'M3250 0 L3190 50 L3160 100',
  'M3280 385 L3370 320 L3430 325 L3510 270',
  'M1060 1030 L960 1120 L920 1200',
  'M1200 1100 L1100 1170 L930 1300',
  'M1375 1070 L1370 1170 L1340 1300 L1305 1400 L1300 1540 L1250 1640 L1270 1690',
  'M1430 1050 L1570 1090 L1630 1130 L1780 1270',
  'M205 1350 L190 1445 L290 1465 L430 1468 L500 1490',
  'M160 1460 L165 1510 L205 1570 L205 1620 L230 1685 L320 1720 L330 1790',
  'M285 2245 L320 2250 L360 2280 L410 2265 L435 2285 L540 2275 L620 2240 L660 2190',
  'M540 2275 L580 2350 L610 2410 L575 2500 L520 2550 L495 2630 L465 2645 L485 2740 L455 2810',
  'M180 2330 L240 2400 L250 2510 L290 2525 L295 2600 L335 2680 L345 2740 L375 2800 L455 2805',
  'M790 2590 L830 2625 L890 2665 L912 2720 L910 2770 L830 2820 L820 2890',
  'M770 2905 L782 3140 L750 3200',
  'M295 2920 L285 3050 L270 3110 L300 3160 L340 3290',
  'M30 3262 L220 3262 L280 3250 L360 3262 L400 3285',
  'M940 3215 L1060 3205 L1090 3170 L1200 3130 L1270 3120 L1380 3020 L1440 2980',
  'M1720 1460 L1675 1480 L1710 1900 L1760 2000',
  'M1710 1910 L1630 1935 L1500 1940 L1465 1980 L1470 2060 L1430 2090',
  'M2010 1220 L2170 1300 L2330 1430',
  'M2220 1545 L2185 1490 L2145 1390 L2165 1340 L2220 1320 L2270 1340 L2320 1350',
  'M1840 1740 L1970 1670 L1990 1700 L2040 1680',
  'M2240 1740 L2340 1670',
  'M1437 2850 L1437 2960',
  'M1660 3030 L1750 3050 L1890 3012 L2000 3060',
  'M1320 3290 L1325 3200 L1400 3120 L1490 3110',
  'M2240 3290 L2350 3245',
  'M2660 2460 L2660 2530 L2610 2630 L2560 2640',
  'M2525 2620 L2430 2750 L2420 2840 L2425 2880 L2365 2960 L2410 3150',
  'M2885 2630 L2815 2690 L2810 2760 L2690 2915 L2620 2920',
  'M2850 3290 L2920 3235 L3000 3220 L3060 3190 L3090 3185',
  'M3430 960 L3490 960 L3450 1020 L3330 1110 M3430 960 L3450 1020',
  'M2630 1045 L2700 1030 L2740 1010 L2800 1030 L2850 1055 L2920 1050 L2950 1010 L3050 1020',
  'M3100 960 L3180 990 L3240 1060 L3330 1110 L3350 1230 L3480 1290 L3470 1600 L3480 1700 L3480 1830',
  'M3100 1430 L3150 1560 L3090 1750 L2980 1900',
  'M2760 1180 L2700 1300 L2760 1330 M2900 1180 L2870 1260 L2940 1330 L3000 1410 M2850 1170 L2870 1350',
  'M2400 1180 L2440 1260 M2350 1440 L2490 1440 M2640 1280 L2560 1400 L2500 1440',
  'M2600 1750 L2680 1720 M2880 1860 L2830 1870 L2850 1960 M2580 1900 L2640 1890 L2690 1860',
  'M2950 1480 L3020 1440 M2820 1450 L2900 1470 M2960 1600 L2940 1700'
]

const roads = [
  'M80 0 L150 33 L245 52 L295 55 L325 72 L410 130 L450 165',
  'M320 0 L313 60',
  'M470 188 L640 163 L695 177 L770 190 L840 235 L905 235 L950 250 L990 257 L1050 285 L1110 300',
  'M475 180 L495 260 L520 345 L557 408 L540 433 L515 435 L518 540 L527 560 L527 620 L512 675 L495 680 L492 710 L513 835 L595 925 L610 985 L630 1040 L655 1060 L683 1100 L713 1150 L713 1195 L730 1220 L785 1275',
  'M0 470 L30 440 L50 410 L80 390 L115 340 L160 320 L200 285 L255 205 L310 170 L430 185',
  'M0 1145 L100 1045 L160 1000 L320 935 L375 920 L400 898 L513 833 L640 838 L665 825 L735 802 L780 797 L825 763 L910 742 L950 738 L1005 720 L1095 720',
  'M1210 510 L1185 515 L1170 560 L1140 580 L1130 640 L1095 720 L1068 800 L1040 830 L1037 860 L1088 935 L1088 1010',
  'M683 1100 L735 1100 L780 1088 L865 1078 L1005 1012 L1060 1005 L1170 1035 L1270 1065 L1370 1060 L1480 1015 L1550 1000 L1640 980 L1780 962',
  'M1115 0 L1205 115 L1285 180 L1302 215 L1302 325 L1385 415 L1595 645 L2085 945 L2160 995 L2300 1105',
  'M1435 0 L1480 90 L1480 115 L1460 140 L1485 220 L1495 320 L1385 415 L1325 460 L1270 478 L1190 515',
  'M1170 325 L1240 320 L1300 300',
  'M2180 0 L2140 50 L2120 90 L2118 130 L2100 185 L2050 215 L2025 230 L1978 268 L1978 310 L1970 335 L1930 355 L1922 360 L1920 415 L1935 440 L1970 430 L2020 432 L2053 412 L2080 460 L2118 495 L2130 545 L2150 575 L2150 610 L2120 710 L2138 770 L2120 840 L2105 890 L2100 940 L2075 1000 L2050 1030 L1970 1070 L1940 1130 L1880 1190 L1780 1275 L1835 1350 L1840 1390 L1820 1465 L1870 1530',
  'M1850 1030 L1900 1085 L1950 1110',
  'M2590 0 L2590 100 L2600 200 L2635 290 L2675 370 L2660 480 L2635 570 L2610 740 L2605 900 L2590 1000',
  'M3340 235 L3510 330',
  'M0 1325 L40 1335 L150 1325 L235 1333 L350 1240 L450 1200 L500 1220 L700 1280 L780 1277',
  'M0 1520 L30 1590 L80 1680 L140 1750 L210 1870 L220 1900 L310 1955 L330 2010 L310 2100 L280 2245 L115 2365',
  'M0 2215 L80 2280 L115 2365 L145 2440 L150 2520 L135 2600 L95 2620',
  'M500 1895 L530 1885',
  'M920 1865 L960 1865 L1040 1828',
  'M830 1960 L828 1975 L795 2010 L800 2080 L780 2110 L730 2200',
  'M980 1435 L1200 1412 L1270 1412 L1420 1372 L1490 1378 L1660 1380 L1730 1455 L1820 1465',
  'M810 1410 L850 1440 L870 1470 L900 1465',
  'M1165 1850 L1200 1980 L1220 2000 L1310 2050 L1400 2055 L1450 2090 L1490 2170 L1530 2280 L1535 2330',
  'M1050 2320 L1170 2275 L1280 2240 L1500 2190 L1580 2150 L1650 2060 L1770 2010 L2020 2015 L2310 2010',
  'M1870 1630 L1830 1710 L1840 1800 L1850 1930 L1840 2030 L1860 2180 L1860 2280 L1850 2330 L1830 2355 L1720 2410 L1690 2440 L1660 2500 L1625 2530 L1610 2590 L1590 2610',
  'M2130 1620 L2300 1510 L2345 1505',
  'M2310 2020 L2250 2040 L2220 2140 L2220 2200',
  'M820 2290 L900 2360 L935 2395',
  'M1080 2335 L990 2380 L935 2395 L970 2460 L980 2485 L1010 2485 L1060 2540 L1100 2620 L1140 2660 L1210 2665 L1270 2710 L1310 2730 L1340 2765 L1390 2790 L1430 2830 L1470 2840 L1530 2825',
  'M935 2395 L820 2540 L600 2740 L480 2840 L450 2862 L300 2880 L150 2925 L0 3025',
  'M90 2800 L150 2925',
  'M565 2785 L600 2850 L600 2900 L530 2940 L560 2975 L600 3000 L650 3060 L700 3110 L730 3170 L750 3220',
  'M600 2895 L690 2887 L770 2900 L830 2897 L930 2920 L970 2975 L1000 3000 L1060 3007 L1130 3007 L1200 3020 L1360 3015 L1450 2965 L1600 2970 L1740 2905 L1820 2890 L1880 2830 L1945 2778 L2030 2780 L2120 2750 L2180 2700 L2220 2600 L2250 2560',
  'M2030 2780 L2025 2940 L2010 3060 L1980 3140 L1980 3200 L1965 3300',
  'M1540 3050 L1620 3040 L1670 3090 L1710 3160 L1750 3220 L1760 3290',
  'M2280 2530 L2340 2465 L2380 2470 L2460 2505 L2480 2525 L2535 2525 L2630 2435 L2700 2455 L2750 2460 L2850 2430',
  'M2480 2525 L2530 2590 L2570 2700 L2600 2790 L2620 2900 L2615 3000 L2600 3100',
  'M3510 2910 L3470 2980 L3410 2995 L3300 3140',
  'M3330 2350 L3350 2450 L3430 2500 L3510 2600',
  'M2800 1545 L2880 1580 L2980 1595 L3130 1660 L3260 1700 L3380 1760 L3460 1830 L3510 1832',
  'M2640 1620 L2670 1680 L2680 1750 L2690 1850',
  'M2750 1600 L2750 1700 L2690 1770',
  'M2800 1620 L2870 1710 L3080 1960',
  'M2990 1880 L2900 1960 L2760 2010',
  'M2740 1600 L2860 1605 L2885 1560 L2890 1450',
  'M2780 1340 L2770 1440 L2800 1545',
  'M2700 1600 L2660 1750',
  'M3460 1830 L3490 1900 L3470 2000 L3480 2200',
  'M3510 2200 L3340 2205 L3260 2215 L3150 2260',
  'M3420 2210 L3440 2290 L3510 2320',
  'M2580 1170 L2580 1290',
  'M2440 1260 L2380 1330 L2375 1430',
  'M2470 2110 L2420 2150 L2400 2220 L2350 2300',
  'M2550 1340 L2620 1430'
]

const mainRoads = [
  'M1045 0 L1070 120 L1110 230 L1150 310 L1210 365 L1360 445 L1440 510 L1530 610 L1590 720 L1640 800 L1690 850 L1780 930 L1870 1000 L1930 1045 L2010 1075 L2100 1100 L2170 1108 L2280 1110 L2330 1125 L2380 1170 L2460 1260 L2520 1320 L2700 1310 L2780 1330 L2840 1360 L2880 1420 L2890 1445 L2960 1420 L3080 1385 L3350 1310 L3510 1255',
  'M3050 0 L3100 60 L3145 120 L3190 250 L3190 400 L3175 470 L3175 510 L3180 600 L3170 790 L3130 860 L3095 960 L3080 1100 L3120 1350 L3130 1400 L3120 1480 L3080 1570 L3030 1640 L2920 1740 L2800 1810 L2700 1845 L2560 1880',
  'M2520 1340 L2495 1400 L2500 1450 L2500 1570 L2520 1650 L2550 1670 L2620 1655 L2570 1750',
  'M2690 1850 L2740 2010 L2760 2120 L2765 2230 L2800 2300 L2880 2470 L2890 2560 L2910 2640 L3000 2770 L3110 3150 L3190 3290',
  'M2230 2140 L2300 2130 L2370 2090 L2430 2010',
  'M0 1930 L80 1905 L220 1898 L260 1885 L330 1820',
  'M410 1830 L460 1870 L480 1920 L520 1990 L600 2070 L640 2140 L760 2250',
  'M1535 2370 L1580 2610 L1540 2720 L1540 2850 L1535 3020 L1500 3090 L1510 3230',
  'M0 3210 L35 3290'
]

const motorways = [
  'M2730 -10 L2640 130 L2580 250 L2520 420 L2480 560 L2440 620 L2340 770 L2210 960 L2140 1080 L2085 1170 L2030 1280 L2008 1400 L2008 1480 L2025 1670 L2050 1820 L2080 1950 L2130 2140 L2160 2240 L2250 2510 L2275 2650 L2268 2780 L2272 2900 L2300 3040 L2370 3210 L2420 3300',
  'M-10 2840 L150 2725 L300 2620 L440 2520 L510 2455 L600 2360 L680 2295 L750 2270 L830 2270 L1000 2300 L1200 2315 L1320 2345 L1425 2360 L1560 2345 L1700 2280 L1850 2205 L2000 2165 L2130 2142 L2225 2140'
]

const works = [
  'M2240 2535 L2250 2640 L2245 2760 L2250 2900 L2275 3040 L2310 3160 L2370 3270 L2400 3310',
  'M2290 2655 L2288 2800 L2290 2900 L2312 3020 L2350 3120 L2405 3220 L2450 3290',
  'M3137 1390 L3132 1490 L3100 1550 L3050 1620',
  'M3110 1390 L3112 1440 M3080 1510 L3000 1625',
  'M3132 870 L3105 980',
  'M3237 390 L3205 450',
  'M1102 155 L1130 245',
  'M2490 1295 L2520 1330',
  'M2545 1326 L2595 1325',
  'M3050 1403 L3075 1395',
  'M3165 1313 L3190 1320'
]

const jams = [
  'M1390 453 L1435 488',
  'M1530 635 L1590 738',
  'M1710 895 L1800 960 L1875 1030',
  'M742 2290 Q770 2314 798 2290',
  'M2770 1320 L2805 1328',
  'M2507 1655 L2517 1670',
  'M3110 1450 L3100 1482'
]
</script>

<style>
body {
  background: #03131f;
}
</style>

<style scoped>
.screen {
  min-height: 100vh;
  display: flex;
  flex-direction: column;
  overflow: hidden;
  background: #03131f;
  color: #fff;
  font-family: Inter, "Liberation Sans", sans-serif;
}

.map {
  position: relative;
}

.map-canvas {
  display: block;
  width: 100%;
}

/* land */
.ground { fill: #dae3c7; }
.forest { fill: #98b183; }
.town { fill: #c4c2b7; }
.industry { fill: #c5d5d3; }
.park { fill: #93bf7e; }
.hospital { fill: #f2d2cf; }
.lake { fill: #9fd3df; }

.old-town {
  fill: #a9bbb3;
  fill-opacity: 0.8;
  stroke: #1b8a8e;
  stroke-width: 7;
}

/* lines */
.line {
  fill: none;
  stroke-linecap: round;
  stroke-linejoin: round;
}

.park-line { stroke: #93bf7e; stroke-width: 12; }
.river { stroke: #9fd3df; stroke-width: 9; }
.lane { stroke: #fdf3cf; stroke-width: 5; }
.rail { stroke: #b3b8b8; stroke-width: 7; }
.rail-ties { stroke: #98a0a5; stroke-width: 6; stroke-dasharray: 24 20; }
.road { stroke: #fff7c8; stroke-width: 19; }
.main-casing { stroke: #fff; stroke-width: 38; }
.main-road { stroke: #fff08a; stroke-width: 25; }
.motorway-casing { stroke: #fff; stroke-width: 46; }
.motorway { stroke: #ffbf00; stroke-width: 34; }
.motorway-middle { stroke: #929ca1; stroke-width: 9; }
.junction { fill: #ffbf00; stroke: #ffbf00; stroke-width: 14; }
.works { stroke: #d5e2e6; stroke-width: 26; }
.works-dash { stroke: #868f99; stroke-width: 13; stroke-linecap: butt; stroke-dasharray: 30 24; }
.jam-edge { stroke: #e58a8c; stroke-width: 24; }
.jam { stroke: #fbdf8a; stroke-width: 11; }
.closed { stroke: #ee4b6b; stroke-width: 18; }
.closed-wide { stroke: #f56f86; stroke-width: 24; }
.closed-dash { stroke: #fff; stroke-width: 10; stroke-linecap: butt; stroke-dasharray: 18 36; }
.shade { fill: url(#shade); }
.faint { opacity: 0.5; }
.route-casing { stroke: #00adef; stroke-width: 94; }
.route { stroke: #0b4b7c; stroke-width: 74; }
.chevron { stroke: #ffd400; stroke-width: 8; stroke-linecap: butt; stroke-linejoin: miter; }

/* signs */
.shield { fill: #fff8b4; stroke: #83888b; stroke-width: 2; }
.shield-text { fill: #7c848b; font: 500 24px "Noto Sans", sans-serif; text-anchor: middle; }
.autobahn { fill: #5596f0; stroke: #fff; stroke-width: 2; }
.autobahn-text { fill: #fff; font: 500 23px "Noto Sans", sans-serif; text-anchor: middle; }
.pin { stroke: #e4e3e7; stroke-width: 9; }
.work { fill: #6b7485; }
.blocked { fill: #e63349; }
.bar { fill: #e63349; }
.halo { fill: #da281e; fill-opacity: 0.58; }

/* place names */
.label {
  font-family: "Noto Sans", sans-serif;
  font-size: 31px;
  paint-order: stroke;
  stroke: #cdced0;
  stroke-width: 4px;
  stroke-linejoin: round;
}

.village { fill: #55595b; }
.town-name { fill: #626c73; font-size: 38px; }
.city { fill: #000; font-size: 54px; stroke: #c9cacc; }
.road-name { fill: #8a949b; font-size: 32px; }
.water { fill: #1c70a8; font-size: 31px; font-style: italic; stroke: #d3e2dc; }

/* status bar */
.status-bar {
  position: absolute;
  top: 48px;
  left: 0;
  right: 0;
  display: flex;
  justify-content: space-between;
  align-items: center;
  height: 60px;
  padding: 0 86px 0 94px;
}

.status-left,
.status-right {
  display: flex;
  align-items: center;
}

.status-left { gap: 14px; }
.status-right { gap: 22px; }

.status-left time {
  font-size: 52px;
  font-weight: 600;
  line-height: 60px;
}

.battery {
  position: relative;
  width: 76px;
  height: 41px;
  border-radius: 13px;
  background: linear-gradient(90deg, #fff 71%, rgba(255, 255, 255, 0.5) 71%);
  color: #596273;
  font-size: 34px;
  font-weight: 700;
  line-height: 41px;
  text-align: center;
}

.battery::after {
  content: "";
  position: absolute;
  top: 14px;
  right: -7px;
  width: 5px;
  height: 13px;
  border-radius: 0 5px 5px 0;
  background: rgba(255, 255, 255, 0.5);
}

.fit-button {
  position: absolute;
  right: 48px;
  bottom: 91px;
  display: flex;
  align-items: center;
  justify-content: center;
  width: 168px;
  height: 168px;
  padding: 0;
  border: 0;
  border-radius: 50%;
  background: #0b4b7c;
  box-shadow: 0 12px 32px rgba(0, 0, 0, 0.35);
}

/* bottom sheet */
.sheet {
  position: relative;
  flex: 1;
  margin-top: -43px;
  padding: 24px 0 72px;
  border-radius: 48px 48px 0 0;
  background: #03131f;
}

.handle {
  width: 168px;
  height: 24px;
  margin: 0 auto;
  border-radius: 12px;
  background: #2a3541;
}

.sheet-header {
  display: flex;
  align-items: center;
  height: 96px;
  margin-top: 60px;
  padding: 0 48px 0 32px;
}

.back {
  display: flex;
  align-items: center;
  justify-content: center;
  width: 104px;
  height: 96px;
  padding: 0;
  border: 0;
  background: none;
}

h1 {
  flex: 1;
  margin: 0;
  font-size: 60px;
  font-weight: 700;
  line-height: 72px;
  text-align: center;
  white-space: nowrap;
}

h2 {
  margin: 50px 0 29px;
  padding: 0 31px;
  font-size: 60px;
  font-weight: 400;
  line-height: 72px;
}

.option {
  display: flex;
  align-items: center;
  justify-content: space-between;
  height: 168px;
  padding: 0 69px 0 31px;
}

.option label {
  font-size: 48px;
  font-weight: 500;
  line-height: 60px;
}

.switch {
  appearance: none;
  position: relative;
  width: 98px;
  height: 42px;
  margin: 0;
  border-radius: 21px;
  background: #f74336;
  cursor: pointer;
}

.switch::before {
  content: "";
  position: absolute;
  top: -9px;
  left: -10px;
  width: 60px;
  height: 60px;
  border-radius: 50%;
  background: #1b75bc;
  box-shadow: 0 3px 6px rgba(0, 0, 0, 0.4);
}

.switch:checked::before {
  left: 48px;
}
</style>
